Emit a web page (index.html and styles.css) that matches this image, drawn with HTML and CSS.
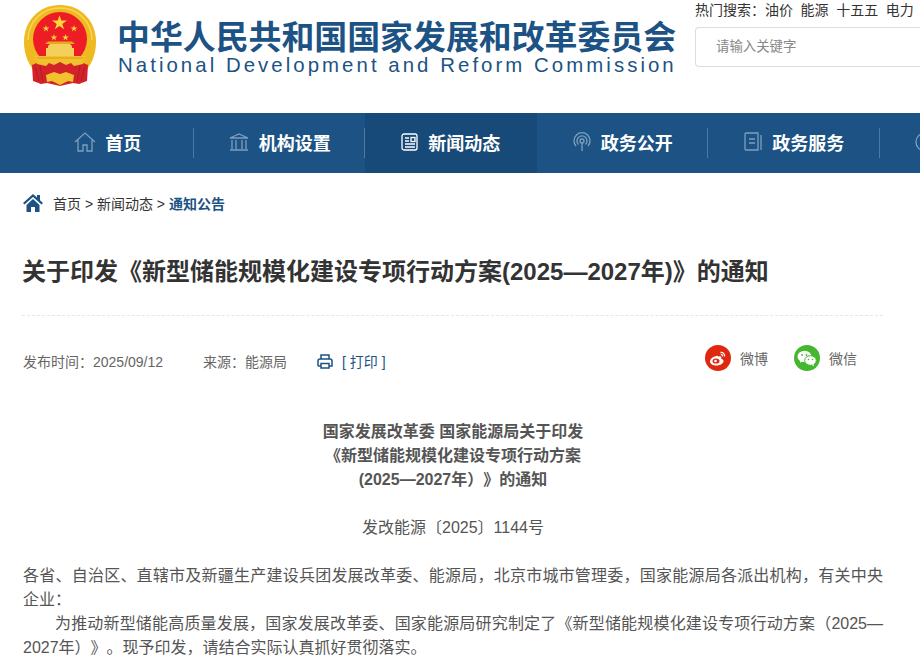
FILE: index.html
```html
<!DOCTYPE html>
<html lang="zh-CN">
<head>
  <meta charset="UTF-8">
  <title>关于印发《新型储能规模化建设专项行动方案(2025—2027年)》的通知</title>
  <link rel="stylesheet" href="styles.css">
</head>
<body>

  <header class="top">
    <svg class="emblem" viewBox="0 0 76 82" width="76" height="82">
      <defs>
        <path id="star" d="M0-1L.225-.31H.95L.36.12.59.81 0 .38-.59.81-.36.12-.95-.31H-.225z"/>
      </defs>
      <path d="M38 0C17 0 2 16 2 37c0 13 5 24 13 32h46c8-8 13-19 13-32C74 16 59 0 38 0z" fill="#efb920"/>
      <path d="M38 3C20 3 6 17 6 35M38 3c18 0 32 14 32 32" fill="none" stroke="#f7d65c" stroke-width="1.500"/>
      <circle cx="38" cy="34" r="27" fill="#ee1c25"/>
      <path d="M10 60l7-3 42 0 7 3-1 16-8 3-6-1-13 3-13-3-6 1-8-3z" fill="#d3222a"/>
      <path d="M13 62l4 14M18 61l3 15M63 62l-4 14M58 61l-3 15" stroke="#a81a20" stroke-width=".8"/>
      <path d="M26 41l2-2h20l2 2v2h2v9H24v-9h2z" fill="#f4cf5a"/>
      <path d="M23 39h30l-3-2.500H26z" fill="#e8a91c"/>
      <path d="M13 51h50l-2 8-9 2-3-3-5 2-6-3-6 3-5-2-3 3-9-2z" fill="#f2c12e"/>
      <path d="M15 53h46" stroke="#d99a18" stroke-width="1"/>
      <path d="M24 70l8-3 6 2 6-2 8 3-1 7-5-1-8 4-8-4-5 1z" fill="#f2c12e"/>
      <g fill="#f9d63c">
        <use href="#star" transform="translate(37.500 18) scale(7.800)"/>
        <use href="#star" transform="translate(24 23.500) scale(3.600)"/>
        <use href="#star" transform="translate(52 23.500) scale(3.600)"/>
        <use href="#star" transform="translate(32 32.500) scale(3.600)"/>
        <use href="#star" transform="translate(43.500 32.500) scale(3.600)"/>
      </g>
    </svg>
    <div class="brand">
      <div class="brand-cn">中华人民共和国国家发展和改革委员会</div>
      <div class="brand-en">National Development and Reform Commission</div>
    </div>
    <div class="search-box">
      <div class="hot">热门搜索：<span>油价</span><span>能源</span><span>十五五</span><span>电力</span></div>
      <div class="search-input">请输入关键字</div>
    </div>
  </header>

  <nav class="nav">
    <a class="nav-item">
      <svg class="nav-icon" viewBox="0 0 22 20" width="22" height="20"><path d="M1 10L11 1l10 9M4 8v11h5v-6h4v6h5V8"/></svg>首页
    </a>
    <a class="nav-item">
      <svg class="nav-icon" viewBox="0 0 22 20" width="22" height="20"><path d="M2 6l9-4 9 4zM2 6h18M4 8v9M8 8v9M14 8v9M18 8v9M2 18h18"/></svg>机构设置
    </a>
    <a class="nav-item active">
      <svg class="nav-icon" viewBox="0 0 18 18" width="18" height="18"><rect x="1" y="1" width="15" height="16" rx="2"/><path d="M4 5h4M4 8h4M4 11h10M4 14h10"/><rect x="10" y="4.500" width="4" height="4"/></svg>新闻动态
    </a>
    <a class="nav-item">
      <svg class="nav-icon" viewBox="0 0 20 20" width="20" height="20"><path d="M10 11v8M4 14a8 8 0 1 1 12 0M6.500 12.500a5 5 0 1 1 7 0"/><circle cx="10" cy="9" r="2"/></svg>政务公开
    </a>
    <a class="nav-item">
      <svg class="nav-icon" viewBox="0 0 20 20" width="20" height="20"><path d="M15 1H3a1 1 0 0 0-1 1v15a1 1 0 0 0 1 1h12zM18 3v15M6 7h6M6 11h6"/></svg>政务服务
    </a>
    <a class="nav-item nav-last">
      <svg class="nav-icon" viewBox="0 0 20 20" width="20" height="20"><circle cx="10" cy="10" r="9"/></svg>
    </a>
  </nav>

  <div class="crumb">
    <svg class="crumb-home" viewBox="0 0 20 18" width="20" height="18"><path d="M10 0L0 9l1.500 1.500L10 3l8.500 7.500L20 9l-3-2.700V1h-3v2.600zM3.500 11L10 5l6.500 6v7H12v-5H8v5H3.500z"/></svg>
    <span>首页 &gt; 新闻动态 &gt; <b>通知公告</b></span>
  </div>

  <main class="article">
    <h1 class="title">关于印发《新型储能规模化建设专项行动方案(2025—2027年)》的通知</h1>

    <div class="meta">
      <span class="meta-date">发布时间：2025/09/12</span>
      <span class="meta-src">来源：能源局</span>
      <svg class="print-icon" viewBox="0 0 16 15" width="16" height="15"><path d="M4 5V1h8v4M1 12V7a2 2 0 0 1 2-2h10a2 2 0 0 1 2 2v5h-3M4 12H1"/><rect x="4" y="9.500" width="8" height="4.500"/></svg>
      <span class="print">[ 打印 ]</span>
      <div class="share">
        <span class="share-item">
          <i class="share-dot weibo">
            <svg viewBox="0 0 18 16" width="18" height="16"><path d="M7.500 6C4 6.500 1 9 1 11.500 1 14 4 15.500 7.500 15.500c4 0 7-2.300 7-4.500 0-1.500-1.500-2-2.300-2.300.4-1 .3-2-.7-2.300-1-.3-2.500.2-2.500.2s.3-1.500-1.500-.6z" fill="#fff"/><ellipse cx="7" cy="11" rx="3.500" ry="2.600" fill="#e0270f"/><circle cx="6.500" cy="11" r="1.300" fill="#fff"/><path d="M11.500 2.500c2.500-.5 4.500 1.500 4 4M11.800 4.500c1-.2 2 .7 1.700 1.800" fill="none" stroke="#fff" stroke-width="1.300"/></svg>
          </i>微博
        </span>
        <span class="share-item">
          <i class="share-dot wechat">
            <svg viewBox="0 0 20 17" width="20" height="17"><ellipse cx="7.500" cy="6.500" rx="7" ry="5.800" fill="#fff"/><path d="M3.500 10l-.7 2.800 3.200-1.600z" fill="#fff"/><ellipse cx="13.500" cy="10.500" rx="5.800" ry="4.800" fill="#fff" stroke="#44b72f"/><path d="M16.500 14l.6 2.200-2.600-1.400z" fill="#fff"/><circle cx="5" cy="5" r=".9" fill="#44b72f"/><circle cx="9.500" cy="5" r=".9" fill="#44b72f"/><circle cx="11.500" cy="9.500" r=".8" fill="#44b72f"/><circle cx="15.500" cy="9.500" r=".8" fill="#44b72f"/></svg>
          </i>微信
        </span>
      </div>
    </div>

    <div class="doc-head">
      国家发展改革委 国家能源局关于印发<br>
      《新型储能规模化建设专项行动方案<br>
      (2025—2027年）》的通知
    </div>
    <p class="doc-no">发改能源〔2025〕1144号</p>
    <p class="doc-text">各省、自治区、直辖市及新疆生产建设兵团发展改革委、能源局，北京市城市管理委，国家能源局各派出机构，有关中央企业：</p>
    <p class="doc-text indent">为推动新型储能高质量发展，国家发展改革委、国家能源局研究制定了《新型储能规模化建设专项行动方案（2025—2027年）》。现予印发，请结合实际认真抓好贯彻落实。</p>
  </main>

</body>
</html>
```

FILE: styles.css
```css
html, body {
  height: 658px;
  overflow: hidden;
}
body {
  margin: 0;
  width: 920px;
  background: #fff;
  color: #333;
  font-family: "Liberation Sans", "Noto Sans CJK SC", sans-serif;
  text-spacing-trim: space-all;
}

/* header */
.top {
  display: flex;
  height: 113px;
  width: 920px;
}
.emblem {
  flex: none;
  margin: 5px 0 0 22px;
}
.brand {
  flex: none;
  width: 560px;
  margin: 19px 0 0 19px;
  color: #1c5384;
}
.brand-cn {
  font-size: 32.900px;
  font-weight: bold;
  line-height: 38px;
  white-space: nowrap;
}
.brand-en {
  margin-top: -3px;
  margin-left: 1px;
  font-size: 20.400px;
  line-height: 22px;
  letter-spacing: 3.050px;
  white-space: nowrap;
}
.search-box {
  flex: none;
  margin-left: 18px;
  width: 225px;
}
.hot {
  font-size: 14px;
  line-height: 20px;
  white-space: nowrap;
}
.hot span {
  margin-right: 7.600px;
}
.search-input {
  box-sizing: border-box;
  height: 40px;
  margin-top: 7px;
  padding-left: 20px;
  border: 1px solid #ddd;
  border-right: 0;
  border-radius: 4px 0 0 4px;
  color: #888;
  font-size: 13.400px;
  line-height: 38px;
}

/* nav */
.nav {
  display: flex;
  box-sizing: border-box;
  height: 60px;
  width: 920px;
  padding-left: 22px;
  overflow: hidden;
  background: #1c5384;
}
.nav-item {
  position: relative;
  display: flex;
  flex: none;
  align-items: center;
  justify-content: center;
  gap: 9px;
  width: 171.500px;
  padding-bottom: 2px;
  box-sizing: border-box;
  color: #fff;
  font-size: 18px;
  font-weight: bold;
}
.nav-item::after {
  content: "";
  position: absolute;
  right: 0;
  top: 15px;
  height: 30px;
  width: 1px;
  background: #4d7aa3;
}
.nav-item.active {
  background: #174a78;
}
.nav-item.active::after,
.nav-last::after {
  display: none;
}
.nav-last {
  justify-content: flex-start;
  padding-left: 35px;
}
.nav-icon {
  flex: none;
  fill: none;
  stroke: #7f9fbf;
  stroke-width: 1.300;
}
.active .nav-icon {
  stroke: #fff;
}

/* breadcrumb */
.crumb {
  display: flex;
  align-items: center;
  height: 60px;
  padding-left: 23px;
  padding-bottom: 1px;
  box-sizing: border-box;
  font-size: 14px;
}
.crumb-home {
  margin-right: 10px;
  fill: #1c5384;
}
.crumb b {
  color: #1c5384;
}

/* article */
.article {
  margin: 0 37px 0 23px;
}
.title {
  margin: 0 0 0 -1px;
  padding: 16px 0 21px;
  border-bottom: 1px dashed #e6e6e6;
  font-size: 24px;
  line-height: 45px;
}
.meta {
  display: flex;
  align-items: center;
  height: 90px;
  color: #666;
  font-size: 14px;
}
.meta-date {
  width: 180px;
}
.meta-src {
  width: 114px;
}
.print-icon {
  margin-right: 9px;
  fill: none;
  stroke: #1c5384;
  stroke-width: 1.500;
}
.print {
  color: #1c5384;
  font-size: 14px;
}
.share {
  display: flex;
  gap: 26px;
  margin-left: auto;
  margin-right: 26px;
  margin-top: -6px;
}
.share-item {
  display: flex;
  align-items: center;
  gap: 9px;
  font-size: 14px;
}
.share-dot {
  display: flex;
  align-items: center;
  justify-content: center;
  width: 26px;
  height: 26px;
  border-radius: 50%;
}
.weibo {
  background: #e0270f;
}
.wechat {
  background: #44b72f;
}
.doc-head {
  margin-top: 14px;
  color: #555;
  font-size: 16px;
  font-weight: bold;
  line-height: 24px;
  text-align: center;
}
.doc-no {
  margin: 24px 0 0;
  color: #555;
  font-size: 16px;
  line-height: 24px;
  text-align: center;
}
.doc-text {
  margin: 0;
  color: #555;
  font-size: 16px;
  line-height: 24px;
  text-align: justify;
}
.doc-no + .doc-text {
  margin-top: 24px;
}
.indent {
  text-indent: 2em;
}
```
